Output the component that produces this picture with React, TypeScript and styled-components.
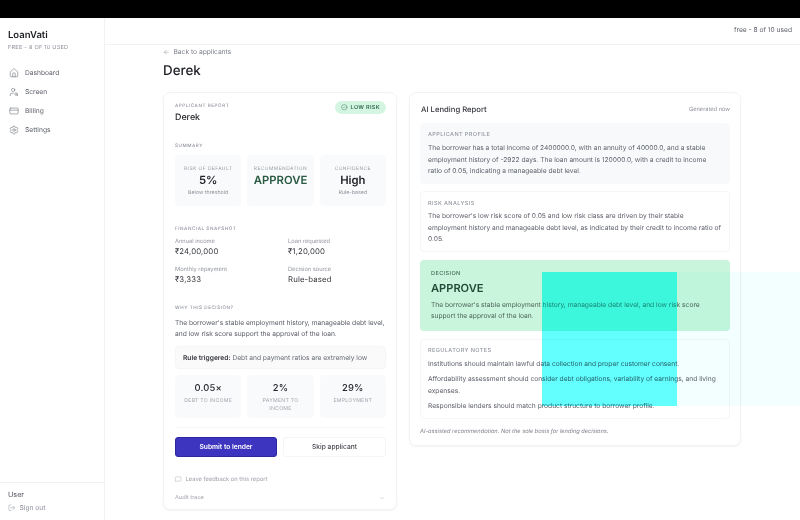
import React from "react";
import styled, { createGlobalStyle } from "styled-components";
import { ArrowLeft, ChevronDown, CircleCheck, CreditCard, House, LogOut, MessageSquare, Settings, UserSearch } from "lucide-react";

const Global = createGlobalStyle`
  html, body { margin: 0; padding: 0; background: #fff; }
  body { font-family: Inter, "Liberation Sans", sans-serif; color: #1b1d23; overflow: hidden; text-rendering: geometricPrecision; }
  * { box-sizing: border-box; }
`;
const Page = styled.div`
  position: relative; width: 800px; height: 520px; overflow: hidden; display: flex; flex-direction: column;
  filter: blur(.3px);
`;
const TopStrip = styled.div`height: 18px; flex: none; background: #000;`;
const Shell = styled.div`flex: 1; min-height: 0; display: flex;`;
const Sidebar = styled.aside`
  width: 105px; flex: none; border-right: 1px solid #f1f2f4; display: flex; flex-direction: column;
`;
const Brand = styled.div`padding: 12px 8px 0; height: 45px; flex: none;`;
const Logo = styled.div`font-size: 9.5px; font-weight: 600; line-height: 12px; color: #1b1d23;`;
const Plan = styled.div`font-size: 5.56px; color: #8b8f99; letter-spacing: .25px; margin-top: 3px; line-height: 7px;`;
const Nav = styled.nav`display: flex; flex-direction: column; gap: 0;`;
const NavItem = styled.div`
  height: 19px; display: flex; align-items: center; gap: 6px; padding-left: 9px;
  font-size: 6.67px; color: #5b5f69;
  svg { width: 10px; height: 10px; stroke-width: 1.4; color: #6d717a; flex: none; }
`;
const SideFoot = styled.div`
  margin-top: auto; border-top: 1px solid #f1f2f4; height: 38px; padding: 7px 8px 0; flex: none;
`;
const UserName = styled.div`font-size: 7.2px; color: #4e525b; line-height: 10px;`;
const SignOut = styled.div`
  display: flex; align-items: center; gap: 4px; font-size: 6.67px; color: #8b8f99; margin-top: 3px; line-height: 10px;
  svg { width: 7.5px; height: 7.5px; stroke-width: 1.5; }
`;
const Main = styled.main`flex: 1; min-width: 0; display: flex; flex-direction: column;`;
const Header = styled.header`
  height: 27px; flex: none; border-bottom: 1px solid #f1f2f4; display: flex; justify-content: flex-end; align-items: center;
  padding: 0 8px 3px 0; font-size: 6.67px; color: #5b5f69;
`;
const Content = styled.div`padding: 3px 0 0 58px; width: 695px;`;
const Back = styled.div`
  display: flex; align-items: center; gap: 4px; font-size: 6.67px; color: #7b7f89; line-height: 9px;
  svg { width: 6.5px; height: 6.5px; stroke-width: 1.5; }
`;
const Title = styled.h1`margin: 5px 0 0; font-size: 13.4px; font-weight: 500; line-height: 18px;`;
const Columns = styled.div`display: flex; gap: 12px; align-items: flex-start; margin-top: 12px;`;
const Card = styled.section<{ $w: number; $h: number; $pl: number }>`
  width: ${p => p.$w}px; height: ${p => p.$h}px; flex: none; background: #fff; border: 1px solid #f2f3f5; border-radius: 7px;
  box-shadow: 0 1px 2px rgba(20,25,40,.05); padding: 10px 10px 10px ${p => p.$pl}px;
`;
const Caption = styled.div<{ $mt?: number }>`
  font-size: 4.6px; letter-spacing: .55px; color: #8d919b; text-transform: uppercase; line-height: 7px; font-weight: 500;
  margin-top: ${p => p.$mt ?? 0}px;
`;
const TopRow = styled.div`display: flex; justify-content: space-between; align-items: flex-start; height: 25px;`;
const Who = styled.div`font-size: 8.9px; font-weight: 500; line-height: 12px; margin-top: 2px; color: #25272d;`;
const Badge = styled.div`
  display: flex; align-items: center; justify-content: center; gap: 3px; width: 51px; height: 13px; margin-top: -2px;
  background: #d3f5e2; border-radius: 7px; font-size: 5.56px; font-weight: 600; color: #356a50; letter-spacing: .3px;
  svg { width: 6.5px; height: 6.5px; stroke-width: 1.6; }
`;
const Tiles = styled.div<{ $mt: number }>`
  display: grid; grid-template-columns: repeat(3, 1fr); gap: 6px; margin-top: ${p => p.$mt}px;
`;
const Tile = styled.div<{ $h: number; $pt: number }>`
  height: ${p => p.$h}px; padding: ${p => p.$pt}px 3px 0; background: #f9fafb; border-radius: 4px; text-align: center;
`;
const TileLabel = styled.div`font-size: 4.9px; letter-spacing: .45px; color: #9a9ea8; line-height: 7px; white-space: nowrap;`;
const TileValue = styled.div<{ $green?: boolean }>`
  font-size: 11.3px; font-weight: 600; line-height: 15px;
  color: ${p => (p.$green ? "#2a5a42" : "#1f2126")};
`;
const TileSub = styled.div`font-size: 5.3px; color: #8d919b; line-height: 8px; margin-top: 1px;`;
const Snapshot = styled.div`display: grid; grid-template-columns: 113px 1fr; row-gap: 8px; margin-top: 4px;`;
const FieldLabel = styled.div`font-size: 5.7px; color: #9296a0; line-height: 9px;`;
const FieldValue = styled.div`font-size: 7.78px; color: #33353b; line-height: 11px; letter-spacing: .15px;`;
const Para = styled.p`margin: 6px 0 0; font-size: 6.67px; line-height: 11px; color: #585c66;`;
const Rule = styled.div`
  height: 23px; margin-top: 6px; padding-left: 7px; display: flex; align-items: center;
  background: #fafafb; border: 1px solid #f4f5f6; border-radius: 4px; font-size: 6.67px; color: #666a74; white-space: pre;
  strong { font-weight: 600; color: #33353b; }
`;
const MetricValue = styled.div`font-size: 9.4px; font-weight: 500; line-height: 12px; color: #25272d; letter-spacing: .2px;`;
const MetricLabel = styled.div`font-size: 5.2px; letter-spacing: .25px; color: #a1a5ae; line-height: 8px; margin-top: 2px; padding: 0 5px;`;
const Divider = styled.div`height: 1px; background: #f7f8f9; margin-top: 9px;`;
const Actions = styled.div`display: grid; grid-template-columns: 102px 103px; justify-content: space-between; margin-top: 9px;`;
const Primary = styled.button`
  height: 19.5px; padding: 0; border: 1px solid #2b28a0; border-radius: 3px; background: #3d35bf; color: #fff;
  font: 600 6.7px Inter, sans-serif;
`;
const Secondary = styled.button`
  height: 19.5px; padding: 0; border: 1px solid #f4f5f6; border-radius: 3px; background: #fff; color: #45484f;
  font: 500 6.7px Inter, sans-serif;
`;
const Feedback = styled.div`
  display: flex; align-items: center; gap: 4px; margin-top: 18px; font-size: 5.8px; color: #9ca0a9; line-height: 9px;
  svg { width: 6.5px; height: 6.5px; stroke-width: 1.4; }
`;
const Audit = styled.div`
  display: flex; align-items: center; justify-content: space-between; margin-top: 10px; font-size: 5.6px; color: #9ca0a9; line-height: 9px;
  svg { width: 6.5px; height: 6.5px; stroke-width: 1.4; margin-right: 1px; }
`;
const ReportHead = styled.div`display: flex; justify-content: space-between; align-items: center; height: 12px; margin: 0 0 8px;`;
const ReportTitle = styled.div`font-size: 7.7px; font-weight: 500; color: #33353b; margin-left: 1px;`;
const Generated = styled.div`font-size: 5.7px; color: #8d919b;`;
const Sections = styled.div`display: flex; flex-direction: column;`;
const Block = styled.div<{ $fill?: boolean; $h: number; $mt?: number; $pt: number; $pr: number }>`
  height: ${p => p.$h}px; margin-top: ${p => p.$mt ?? 0}px; padding: ${p => p.$pt}px ${p => p.$pr}px 0 7px; border-radius: 4px;
  background: ${p => (p.$fill ? "#f8f9fb" : "#fff")}; border: 1px solid ${p => (p.$fill ? "#f8f9fb" : "#f5f6f7")};
`;
const BlockTitle = styled.div`font-size: 5.56px; letter-spacing: .4px; color: #9296a0; line-height: 8px; font-weight: 500;`;
const BlockText = styled.p<{ $mt: number }>`margin: ${p => p.$mt}px 0 0; font-size: 6.67px; line-height: 11.6px; color: #5d616b;`;
const Decision = styled.div`
  height: 71px; margin-top: 8px; padding: 10px 10px 0 11px; background: #c9f5dc; border-radius: 4px;
`;
const DecisionLabel = styled.div`font-size: 5.56px; letter-spacing: .4px; color: #456a58; line-height: 8px; font-weight: 500;`;
const DecisionValue = styled.div`font-size: 11.1px; font-weight: 600; color: #234a37; line-height: 15px; margin-top: 3px;`;
const DecisionText = styled.p`margin: 4px 0 0; font-size: 6.67px; line-height: 11.4px; color: #4e6459;`;
const Note = styled.p`margin: 3.3px 0 0; font-size: 6.67px; line-height: 11.8px; color: #5d616b; &:first-of-type { margin-top: 4.3px; }`;
const Disclaimer = styled.div`margin-top: 9px; font-size: 5.7px; font-style: italic; color: #7b7f89; line-height: 8px;`;
const Flash = styled.div`
  position: absolute; left: 542px; top: 272px; width: 135px; height: 134px; background: #62fffe; mix-blend-mode: multiply;
`;
const FlashBand = styled.div`
  position: absolute; left: 542px; top: 272px; width: 135px; height: 59px; background: rgba(0, 255, 220, .22);
`;
const FlashTail = styled.div`
  position: absolute; left: 677px; top: 272px; width: 123px; height: 134px; background: #f2fffe; mix-blend-mode: multiply;
`;

export default function App() {
  return (
    <Page>
      <Global />
      <TopStrip />
      <Shell>
        <Sidebar>
          <Brand>
            <Logo>LoanVati</Logo>
            <Plan>FREE - 8 OF 10 USED</Plan>
          </Brand>
          <Nav>
            <NavItem><House />Dashboard</NavItem>
            <NavItem><UserSearch />Screen</NavItem>
            <NavItem><CreditCard />Billing</NavItem>
            <NavItem><Settings />Settings</NavItem>
          </Nav>
          <SideFoot>
            <UserName>User</UserName>
            <SignOut><LogOut />Sign out</SignOut>
          </SideFoot>
        </Sidebar>
        <Main>
          <Header>free - 8 of 10 used</Header>
          <Content>
            <Back><ArrowLeft />Back to applicants</Back>
            <Title>Derek</Title>
            <Columns>
              <Card $w={234} $h={418} $pl={11}>
                <TopRow>
                  <div>
                    <Caption>Applicant report</Caption>
                    <Who>Derek</Who>
                  </div>
                  <Badge><CircleCheck />LOW RISK</Badge>
                </TopRow>
                <Caption $mt={15}>Summary</Caption>
                <Tiles $mt={5}>
                  <Tile $h={51} $pt={11}>
                    <TileLabel>RISK OF DEFAULT</TileLabel>
                    <TileValue>5%</TileValue>
                    <TileSub>Below threshold</TileSub>
                  </Tile>
                  <Tile $h={51} $pt={11}>
                    <TileLabel>RECOMMENDATION</TileLabel>
                    <TileValue $green>APPROVE</TileValue>
                  </Tile>
                  <Tile $h={51} $pt={11}>
                    <TileLabel>CONFIDENCE</TileLabel>
                    <TileValue>High</TileValue>
                    <TileSub>Rule-based</TileSub>
                  </Tile>
                </Tiles>
                <Caption $mt={20}>Financial snapshot</Caption>
                <Snapshot>
                  <div><FieldLabel>Annual income</FieldLabel><FieldValue>₹24,00,000</FieldValue></div>
                  <div><FieldLabel>Loan requested</FieldLabel><FieldValue>₹1,20,000</FieldValue></div>
                  <div><FieldLabel>Monthly repayment</FieldLabel><FieldValue>₹3,333</FieldValue></div>
                  <div><FieldLabel>Decision source</FieldLabel><FieldValue>Rule-based</FieldValue></div>
                </Snapshot>
                <Caption $mt={20}>Why this decision?</Caption>
                <Para>The borrower's stable employment history, manageable debt level, and low risk score support the approval of the loan.</Para>
                <Rule><strong>Rule triggered:</strong> Debt and payment ratios are extremely low</Rule>
                <Tiles $mt={6}>
                  <Tile $h={43} $pt={8}>
                    <MetricValue>0.05×</MetricValue>
                    <MetricLabel>DEBT TO INCOME</MetricLabel>
                  </Tile>
                  <Tile $h={43} $pt={8}>
                    <MetricValue>2%</MetricValue>
                    <MetricLabel>PAYMENT TO INCOME</MetricLabel>
                  </Tile>
                  <Tile $h={43} $pt={8}>
                    <MetricValue>29%</MetricValue>
                    <MetricLabel>EMPLOYMENT</MetricLabel>
                  </Tile>
                </Tiles>
                <Divider />
                <Actions>
                  <Primary>Submit to lender</Primary>
                  <Secondary>Skip applicant</Secondary>
                </Actions>
                <Feedback><MessageSquare />Leave feedback on this report</Feedback>
                <Audit>Audit trace<ChevronDown /></Audit>
              </Card>
              <Card $w={332} $h={354} $pl={10}>
                <ReportHead>
                  <ReportTitle>AI Lending Report</ReportTitle>
                  <Generated>Generated now</Generated>
                </ReportHead>
                <Sections>
                  <Block $fill $h={61} $pt={7} $pr={12}>
                    <BlockTitle>APPLICANT PROFILE</BlockTitle>
                    <BlockText $mt={4}>The borrower has a total income of 2400000.0, with an annuity of 40000.0, and a stable employment history of -2922 days. The loan amount is 120000.0, with a credit to income ratio of 0.05, indicating a manageable debt level.</BlockText>
                  </Block>
                  <Block $h={61} $mt={7} $pt={8} $pr={5}>
                    <BlockTitle>RISK ANALYSIS</BlockTitle>
                    <BlockText $mt={3}>The borrower's low risk score of 0.05 and low risk class are driven by their stable employment history and manageable debt level, as indicated by their credit to income ratio of 0.05.</BlockText>
                  </Block>
                  <Decision>
                    <DecisionLabel>DECISION</DecisionLabel>
                    <DecisionValue>APPROVE</DecisionValue>
                    <DecisionText>The borrower's stable employment history, manageable debt level, and low risk score support the approval of the loan.</DecisionText>
                  </Decision>
                  <Block $h={80} $mt={8} $pt={7} $pr={5}>
                    <BlockTitle>REGULATORY NOTES</BlockTitle>
                    <Note>Institutions should maintain lawful data collection and proper customer consent.</Note>
                    <Note>Affordability assessment should consider debt obligations, variability of earnings, and living expenses.</Note>
                    <Note>Responsible lenders should match product structure to borrower profile.</Note>
                  </Block>
                </Sections>
                <Disclaimer>AI-assisted recommendation. Not the sole basis for lending decisions.</Disclaimer>
              </Card>
            </Columns>
          </Content>
        </Main>
      </Shell>
      <Flash />
      <FlashBand />
      <FlashTail />
    </Page>
  );
}
